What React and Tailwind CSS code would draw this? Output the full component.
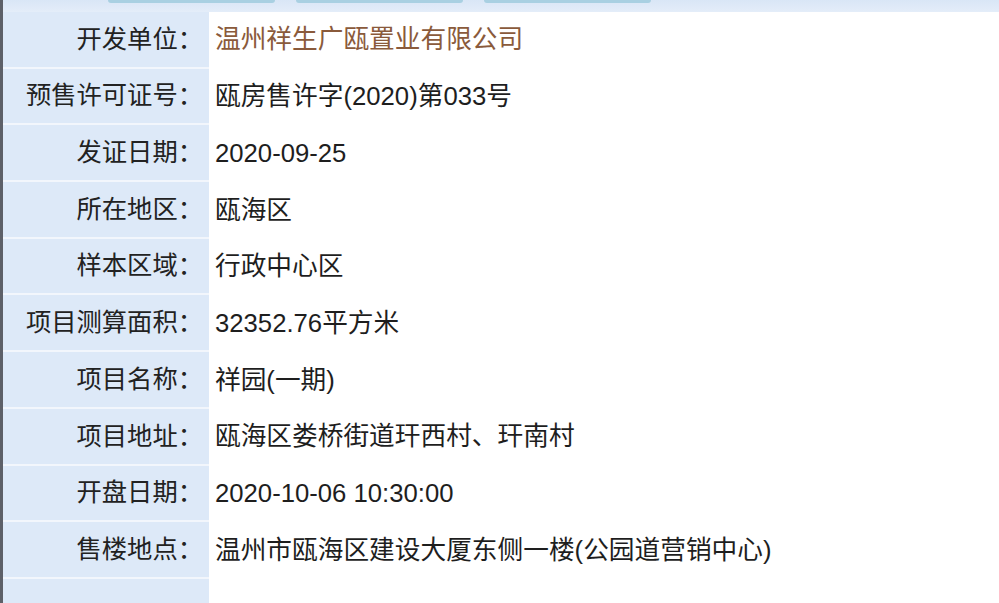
import React from "react";

const rows = [
  ["开发单位：", "温州祥生广瓯置业有限公司", true],
  ["预售许可证号：", "瓯房售许字(2020)第033号"],
  ["发证日期：", "2020-09-25"],
  ["所在地区：", "瓯海区"],
  ["样本区域：", "行政中心区"],
  ["项目测算面积：", "32352.76平方米"],
  ["项目名称：", "祥园(一期)"],
  ["项目地址：", "瓯海区娄桥街道玕西村、玕南村"],
  ["开盘日期：", "2020-10-06 10:30:00"],
  ["售楼地点：", "温州市瓯海区建设大厦东侧一楼(公园道营销中心)"],
  ["", ""],
];

export default function App() {
  return (
    <div
      className="w-[999px] h-[603px] overflow-hidden bg-white flex"
      style={{ fontFamily: '"Liberation Sans", "Noto Sans CJK SC", sans-serif' }}
    >
      <div className="w-[3px] shrink-0 bg-[#5d6068]" />
      <div className="flex-1 flex flex-col">
        <div className="h-[12px] shrink-0 bg-gradient-to-b from-[#d9e6f6] to-[#e4edf9] flex pl-[105px] gap-[21px]">
          <div className="w-[167px] h-[3px] bg-[#a9d0e2] rounded-b-sm" />
          <div className="w-[167px] h-[3px] bg-[#a9d0e2] rounded-b-sm" />
          <div className="w-[167px] h-[3px] bg-[#a9d0e2] rounded-b-sm" />
        </div>
        {rows.map(([label, value, brown], i) => (
          <div key={i} className="flex h-[56.7px] shrink-0">
            <div className="w-[206px] shrink-0 bg-[#dde9f8] border-b-[2px] border-[#f2f6fc] flex items-center justify-end pr-[6px] text-[25.3px] leading-none text-[#222]">
              {label}
            </div>
            <div
              className={
                "flex-1 flex items-center pl-[6px] text-[25.7px] leading-none bg-white " +
                (brown ? "text-[#8a5a3b]" : "text-[#1e1e1e]")
              }
            >
              {value}
            </div>
          </div>
        ))}
      </div>
    </div>
  );
}
